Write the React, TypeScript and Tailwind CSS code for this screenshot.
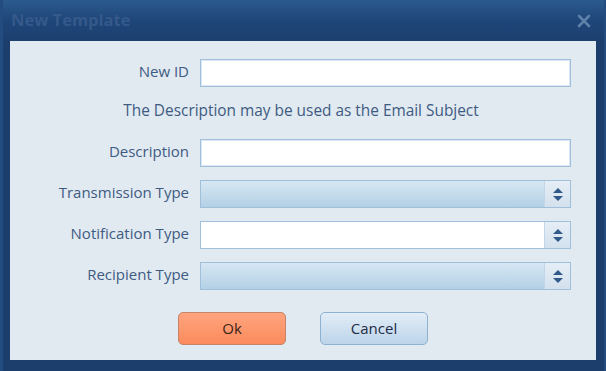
import React from "react";

const font = { fontFamily: '"Open Sans", "DejaVu Sans", sans-serif' };

function Spinner() {
  return (
    <div className="w-[26px] h-full border-l border-[#c2d6e8] bg-gradient-to-b from-[#e6eef6] to-[#d3e1ee] flex flex-col items-center justify-center gap-[3px]">
      <svg width="10" height="5" viewBox="0 0 10 5">
        <path d="M0 5 L5 0 L10 5 Z" fill="#2f5a8a" />
      </svg>
      <svg width="10" height="5" viewBox="0 0 10 5">
        <path d="M0 0 L10 0 L5 5 Z" fill="#2f5a8a" />
      </svg>
    </div>
  );
}

function Row({ label, children }: { label: string; children: React.ReactNode }) {
  return (
    <div className="flex items-center h-[28px]">
      <div className="w-[180px] pr-[1px] text-right text-[15px] leading-none pb-[3px] text-[#3e5b82]">{label}</div>
      <div className="ml-[10px] w-[371px] h-full">{children}</div>
    </div>
  );
}

function TextBox() {
  return (
    <div className="h-full border border-[#9fbfdb] bg-white shadow-[inset_0_0_0_1px_#dbe7f2]" />
  );
}

function Combo({ white }: { white?: boolean }) {
  return (
    <div
      className={
        "h-full border border-[#9fbfdb] flex " +
        (white ? "bg-white" : "bg-gradient-to-b from-[#d6e7f3] to-[#b3d0e5]")
      }
    >
      <div className="flex-1" />
      <Spinner />
    </div>
  );
}

export default function App() {
  return (
    <div className="w-[606px] h-[371px] bg-[#1c3e6c] flex flex-col border-l-[3px] border-r-[2px] border-[#234d80]" style={font}>
      <div className="h-[41px] shrink-0 bg-gradient-to-b from-[#2b5a8f] via-[#1f4679] to-[#1c3f6e] flex items-center justify-between pl-[8px] pr-[13px]">
        <span className="text-[16.5px] font-bold text-[#35598a] pb-[1px]">New Template</span>
        <svg width="14" height="14" viewBox="0 0 14 14">
          <path d="M2 2 L12 12 M12 2 L2 12" stroke="#5f80a8" strokeWidth="2.6" strokeLinecap="round" />
        </svg>
      </div>
      <div className="ml-[7px] mr-[8px] h-[319px] bg-[#e1e9f1] pt-[18px] flex flex-col">
        <Row label="New ID">
          <TextBox />
        </Row>
        <div className="h-[52px] flex items-center justify-center pr-[4px] pb-[4px] text-[15.4px] text-[#3e5b82]">
          The Description may be used as the Email Subject
        </div>
        <Row label="Description">
          <TextBox />
        </Row>
        <div className="h-[13px]" />
        <Row label="Transmission Type">
          <Combo />
        </Row>
        <div className="h-[13px]" />
        <Row label="Notification Type">
          <Combo white />
        </Row>
        <div className="h-[13px]" />
        <Row label="Recipient Type">
          <Combo />
        </Row>
        <div className="flex gap-[34px] pl-[168px] mt-[22px]">
          <button className="w-[108px] h-[33px] rounded-[5px] border border-[#c58367] bg-gradient-to-b from-[#ffa47e] to-[#fb8b5c] text-[15px] text-[#3a2418]">
            Ok
          </button>
          <button className="w-[108px] h-[33px] rounded-[5px] border border-[#8eb1d1] bg-gradient-to-b from-[#e2edf7] to-[#bcd4e9] text-[15px] text-[#1f2b48]">
            Cancel
          </button>
        </div>
      </div>
    </div>
  );
}
